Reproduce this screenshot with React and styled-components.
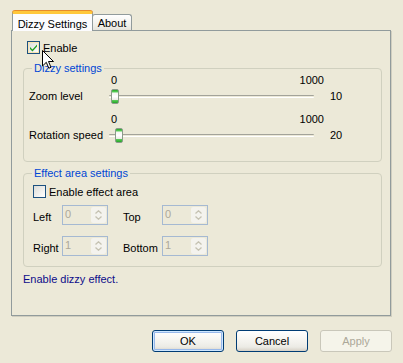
import React from 'react';
import styled, { createGlobalStyle } from 'styled-components';

const Global = createGlobalStyle`
  html, body { margin: 0; padding: 0; background: #ece9d8; }
  body {
    font-family: "Liberation Sans", Arial, sans-serif;
    font-size: 11px;
    color: #000;
  }
  #root { width: 403px; height: 363px; overflow: hidden; }
`;

const Dialog = styled.div`
  position: relative;
  width: 403px;
  height: 363px;
  box-sizing: border-box;
  padding: 11px 0 0 11px;
  background: #ece9d8;
`;

const TabStrip = styled.div`
  display: flex;
  align-items: flex-end;
  height: 19px;
  padding-left: 1px;
  position: relative;
  z-index: 2;
`;

const Tab = styled.div`
  box-sizing: border-box;
  display: flex;
  align-items: center;
  justify-content: center;
  border: 1px solid #919b9c;
  border-bottom: none;
  border-radius: 3px 3px 0 0;
  height: ${p => (p.$active ? '20px' : '16px')};
  margin-bottom: ${p => (p.$active ? '-1px' : '0')};
  width: ${p => p.$w}px;
  padding-top: ${p => (p.$active ? '2px' : '1px')};
  margin-left: ${p => (p.$active ? '0' : '-1px')};
  background: ${p => (p.$active ? '#fcfcfe' : 'linear-gradient(#ffffff, #f0efe9 70%, #e6e4dc)')};
  border-top: ${p => (p.$active ? '3px solid #ffc83c' : '1px solid #919b9c')};
  box-shadow: ${p => (p.$active ? '0 -1px 0 #e68b2c' : 'none')};
  position: relative;
  z-index: ${p => (p.$active ? 2 : 1)};
`;

const Panel = styled.div`
  box-sizing: border-box;
  width: 380px;
  height: 286px;
  border: 1px solid #919b9c;
  box-shadow: 1px 1px 0 #d0cebf;
  background: #ece9d8;
  padding: 0 8px 0 11px;
  display: flex;
  flex-direction: column;
`;

const CheckRow = styled.label`
  display: flex;
  align-items: center;
  height: 13px;
  gap: 3px;
  margin: ${p => p.$m};
`;

const CheckBox = styled.span`
  box-sizing: border-box;
  width: 13px;
  height: 13px;
  border: 1px solid #1c5180;
  background: linear-gradient(135deg, #dcdcd7, #ffffff);
  box-shadow: ${p => (p.$hover ? 'inset 0 0 0 1px #f9e4b0' : 'none')};
  display: flex;
  align-items: center;
  justify-content: center;
`;

const Group = styled.div`
  position: relative;
  box-sizing: border-box;
  width: 359px;
  height: 94px;
  border: 1px solid #d0d0bf;
  border-radius: 4px;
  margin-top: ${p => p.$mt}px;
  flex-shrink: 0;
`;

const Legend = styled.span`
  position: absolute;
  left: 8px;
  top: -8px;
  padding: 0 2px;
  line-height: 14px;
  background: #ece9d8;
  color: #0046d5;
`;

const SliderBlock = styled.div`
  display: grid;
  grid-template-columns: 76px 213px 1fr;
  grid-template-rows: 13px 18px;
  padding-left: 5px;
  margin-top: ${p => p.$mt}px;
  align-items: center;
`;

const ScaleMin = styled.span`
  grid-column: 2;
  grid-row: 1;
  padding-left: 6px;
  line-height: 13px;
`;

const ScaleMax = styled.span`
  grid-column: 2;
  grid-row: 1;
  justify-self: end;
  margin-right: -6px;
  line-height: 13px;
`;

const RowLabel = styled.span`
  grid-column: 1;
  grid-row: 2;
  line-height: 13px;
`;

const Track = styled.div`
  grid-column: 2;
  grid-row: 2;
  position: relative;
  height: 18px;
  &::before {
    content: '';
    position: absolute;
    left: 4px;
    right: 4px;
    top: 8px;
    height: 1px;
    border-top: 1px solid #a3a39a;
    border-bottom: 1px solid #ffffff;
    border-radius: 1px;
  }
`;

const Thumb = styled.div`
  position: absolute;
  top: 2px;
  width: 8px;
  height: 15px;
  box-sizing: border-box;
  border: 1px solid #8b9b8b;
  border-radius: 2px;
  background: linear-gradient(
    #25a625 0, #5ecf5e 2px, #f6f6f2 3px, #ffffff 50%, #ecebe4 calc(100% - 3px),
    #5ecf5e calc(100% - 3px), #25a625 100%
  );
`;

const Value = styled.span`
  grid-column: 3;
  grid-row: 2;
  padding-left: 12px;
  line-height: 13px;
`;

const SpinGrid = styled.div`
  display: grid;
  grid-template-columns: 29px 46px 15px 39px 46px;
  grid-auto-rows: 20px;
  row-gap: 11px;
  padding-left: 9px;
  margin-top: 7px;
  align-items: center;
`;

const SpinLabel = styled.span`
  line-height: 13px;
  padding-top: 4px;
`;

const Spin = styled.div`
  box-sizing: border-box;
  height: 20px;
  border: 1px solid #a5b9d2;
  background: #ece9d8;
  display: flex;
  align-items: stretch;
`;

const SpinText = styled.span`
  flex: 1;
  color: #aca899;
  padding-left: 2px;
  line-height: 17px;
`;

const SpinButtons = styled.div`
  width: 15px;
  margin: 1px;
  border-radius: 2px;
  background: #f4f3ee;
  display: flex;
  flex-direction: column;
  align-items: center;
  justify-content: center;
  gap: 2px;
`;

const Desc = styled.div`
  margin-top: 5px;
  color: #0c0c8a;
  line-height: 14px;
`;

const ButtonRow = styled.div`
  display: flex;
  justify-content: flex-end;
  gap: 12px;
  padding-right: 11px;
  margin-top: 14px;
`;

const Button = styled.button`
  box-sizing: border-box;
  width: 72px;
  height: 22px;
  font: inherit;
  font-size: 11px;
  border-radius: 3px;
  padding: 0;
  border: 1px solid ${p => (p.disabled ? '#c9c7ba' : '#003c74')};
  color: ${p => (p.disabled ? '#aca899' : '#000')};
  background: ${p =>
    p.disabled ? '#f5f4ea' : 'linear-gradient(#ffffff, #f7f6f2 40%, #ecebe5 80%, #d6d0c5)'};
  box-shadow: ${p =>
    p.$default ? 'inset 0 0 0 1px #cee7ff, inset 0 0 0 2px #98b8ea' : 'none'};
`;

const Cursor = styled.svg`
  position: absolute;
  left: 42px;
  top: 50px;
  z-index: 5;
`;

const Check = () => (
  <svg width="9" height="9" viewBox="0 0 9 9">
    <path d="M1 4 L3.5 6.5 L8 1.5 L8 3.5 L3.5 8.5 L1 6 Z" fill="#21a121" />
  </svg>
);

const Arrow = ({ up }) => (
  <svg width="7" height="4" viewBox="0 0 7 4">
    <path d={up ? 'M0.5 3.5 L3.5 0.8 L6.5 3.5' : 'M0.5 0.5 L3.5 3.2 L6.5 0.5'} stroke="#c5c2b2" strokeWidth="1.3" fill="none" />
  </svg>
);

const SpinBox = ({ value }) => (
  <Spin>
    <SpinText>{value}</SpinText>
    <SpinButtons>
      <Arrow up />
      <Arrow />
    </SpinButtons>
  </Spin>
);

const SliderRow = ({ label, value, mt }) => (
  <SliderBlock $mt={mt}>
    <ScaleMin>0</ScaleMin>
    <ScaleMax>1000</ScaleMax>
    <RowLabel>{label}</RowLabel>
    <Track>
      <Thumb style={{ left: 2 + value * 0.4 }} />
    </Track>
    <Value>{value}</Value>
  </SliderBlock>
);

export default function App() {
  return (
    <Dialog>
      <Global />
      <TabStrip>
        <Tab $active $w={81}>Dizzy Settings</Tab>
        <Tab $w={40}>About</Tab>
      </TabStrip>
      <Panel>
        <CheckRow $m="10px 0 0 4px">
          <CheckBox $hover>
            <Check />
          </CheckBox>
          Enable
        </CheckRow>
        <Group $mt={14}>
          <Legend>Dizzy settings</Legend>
          <SliderRow label="Zoom level" value={10} mt={5} />
          <SliderRow label="Rotation speed" value={20} mt={8} />
        </Group>
        <Group $mt={11}>
          <Legend>Effect area settings</Legend>
          <CheckRow $m="11px 0 0 9px">
            <CheckBox />
            Enable effect area
          </CheckRow>
          <SpinGrid>
            <SpinLabel>Left</SpinLabel>
            <SpinBox value="0" />
            <span />
            <SpinLabel>Top</SpinLabel>
            <SpinBox value="0" />
            <SpinLabel>Right</SpinLabel>
            <SpinBox value="1" />
            <span />
            <SpinLabel>Bottom</SpinLabel>
            <SpinBox value="1" />
          </SpinGrid>
        </Group>
        <Desc>Enable dizzy effect.</Desc>
      </Panel>
      <ButtonRow>
        <Button $default>OK</Button>
        <Button>Cancel</Button>
        <Button disabled>Apply</Button>
      </ButtonRow>
      <Cursor width="12" height="19" viewBox="0 0 12 19">
        <path d="M0.5 0.5 L0.5 16 L4.3 12.3 L6.8 18.2 L9 17.3 L6.5 11.5 L11.5 11.5 Z" fill="#fff" stroke="#000" strokeWidth="1" strokeLinejoin="miter" />
      </Cursor>
    </Dialog>
  );
}
